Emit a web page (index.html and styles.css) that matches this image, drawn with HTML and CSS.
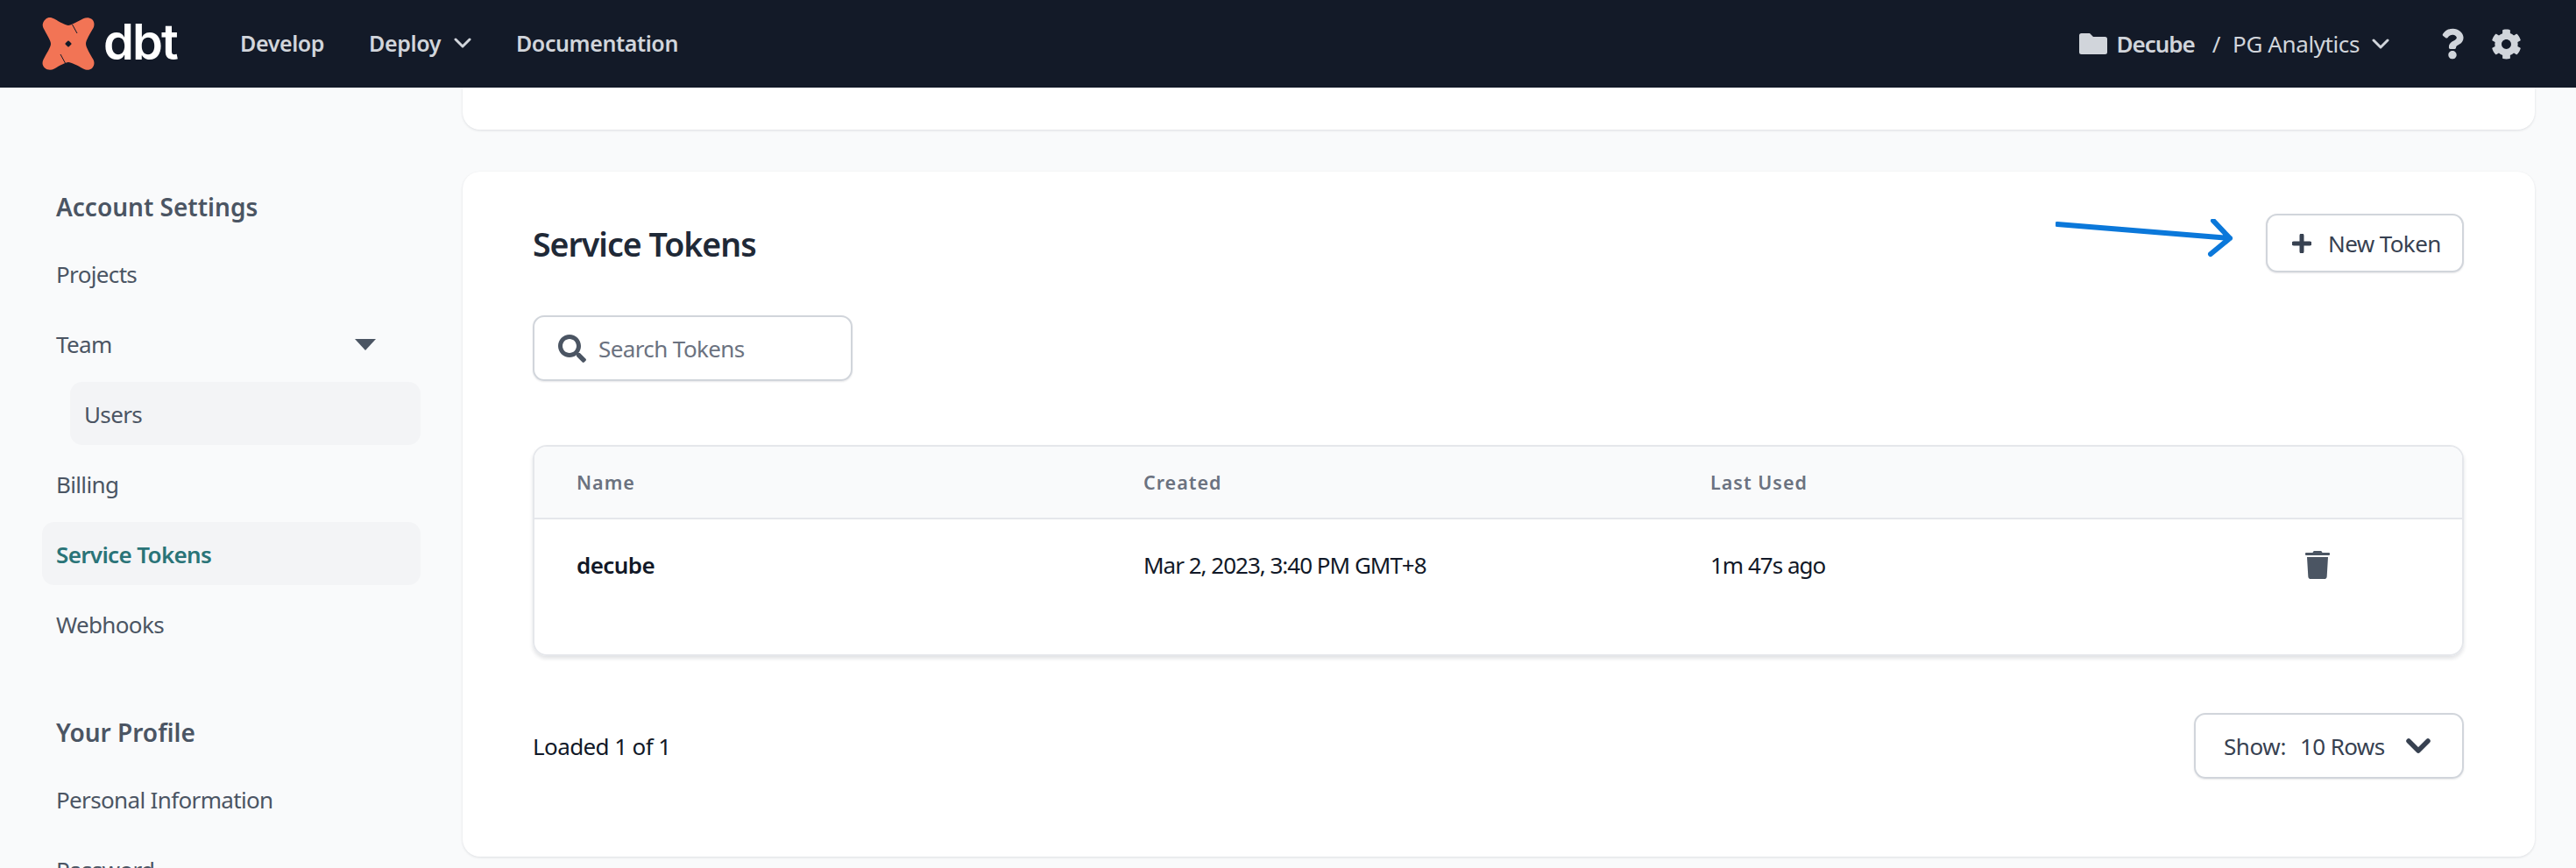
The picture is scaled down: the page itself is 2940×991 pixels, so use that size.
FILE: index.html
```html
<!DOCTYPE html>
<html lang="en">
<head>
<meta charset="utf-8">
<title>Service Tokens</title>
<link rel="stylesheet" href="styles.css">
</head>
<body>
<header class="topbar">
  <a class="brand">
    <svg class="brand-mark" viewBox="0 0 60 60">
      <path fill="#f27455" d="M4 2C7-1 11 0 14 1.500C20 5 27 9 30 9C33 9 41 4 47 1.200C50-.3 54-.3 57 2C60 5 60 9 58.500 12C55 18 50 26 50 30C50 34 55 42 58.500 48C60 51 60 55 57 58C54 60.500 50 60 47 58.500C41 55 33 51 30 51C27 51 20 55 14 58.500C10 60.500 6 60 3 57.500C0 54.500 0 51 1.500 48C5 41 10 34 10 30C10 26 5 19 1.500 12C0 9 .5 5 4 2Z"/>
      <path fill="none" stroke="#131a28" stroke-width="1" d="M34.500 8L40 18M21 42L27 53"/>
      <rect x="27.200" y="27.200" width="5.600" height="5.600" rx="1" fill="#131a28" transform="rotate(45 30 30)"/>
    </svg>
    <span class="brand-name">dbt</span>
  </a>
  <nav class="topnav">
    <a class="topnav-link">Develop</a>
    <a class="topnav-link">Deploy
      <svg class="chev-sm" viewBox="0 0 20 12"><path d="M2 2l8 8 8-8"/></svg>
    </a>
    <a class="topnav-link">Documentation</a>
  </nav>
  <div class="topright">
    <svg class="folder" viewBox="0 0 32 24"><path d="M2.500 0h9.500l4 4h13.500a2.500 2.500 0 0 1 2.500 2.500v15a2.500 2.500 0 0 1-2.500 2.500h-27a2.500 2.500 0 0 1-2.500-2.500v-19a2.500 2.500 0 0 1 2.500-2.500z"/></svg>
    <span class="account">Decube</span>
    <span class="slash">/</span>
    <span class="project">PG Analytics</span>
    <svg class="chev-sm chev-project" viewBox="0 0 20 12"><path d="M2 2l8 8 8-8"/></svg>
    <svg class="icon-help" viewBox="0 0 384 512"><path d="M202.021 0C122.202 0 70.503 32.703 29.914 91.026c-7.363 10.58-5.093 25.086 5.178 32.874l43.138 32.709c10.373 7.865 25.132 6.026 33.253-4.148 25.049-31.381 43.63-49.449 82.757-49.449 30.764 0 68.816 19.799 68.816 49.631 0 22.552-18.617 34.134-48.993 51.164-35.423 19.86-82.299 44.576-82.299 106.405V320c0 13.255 10.745 24 24 24h72.471c13.255 0 24-10.745 24-24v-5.773c0-42.86 125.268-44.645 125.268-160.627C377.504 66.256 286.902 0 202.021 0zM192 373.459c-38.196 0-69.271 31.075-69.271 69.271 0 38.195 31.075 69.27 69.271 69.27s69.271-31.075 69.271-69.271-31.075-69.27-69.271-69.27z"/></svg>
    <svg class="icon-gear" viewBox="0 0 512 512"><path d="M487.4 315.7l-42.6-24.6c4.3-23.2 4.3-47 0-70.2l42.6-24.6c4.9-2.8 7.1-8.6 5.5-14-11.1-35.6-30-67.8-54.7-94.6-3.8-4.1-10-5.1-14.8-2.3L380.8 110c-17.9-15.4-38.5-27.3-60.8-35.1V25.800c0-5.600-3.900-10.500-9.400-11.700-36.700-8.200-74.300-7.800-109.200 0-5.500 1.200-9.400 6.100-9.400 11.700V75c-22.200 7.900-42.800 19.800-60.800 35.100L88.700 85.500c-4.900-2.800-11-1.900-14.800 2.300-24.700 26.700-43.600 58.900-54.700 94.600-1.700 5.400.600 11.200 5.500 14L67.300 221c-4.300 23.200-4.300 47 0 70.200l-42.600 24.600c-4.900 2.800-7.100 8.600-5.500 14 11.100 35.600 30 67.800 54.700 94.600 3.800 4.100 10 5.100 14.800 2.300l42.600-24.600c17.900 15.400 38.500 27.300 60.800 35.100v49.200c0 5.600 3.900 10.500 9.400 11.700 36.700 8.200 74.300 7.800 109.200 0 5.500-1.200 9.400-6.100 9.400-11.700v-49.200c22.200-7.900 42.800-19.800 60.800-35.100l42.600 24.600c4.900 2.800 11 1.900 14.800-2.300 24.700-26.700 43.600-58.900 54.700-94.600 1.500-5.500-.700-11.300-5.600-14.100zM256 336c-44.100 0-80-35.900-80-80s35.900-80 80-80 80 35.900 80 80-35.900 80-80 80z"/></svg>
  </div>
</header>
<div class="shell">
  <aside class="sidebar">
    <h2 class="side-heading">Account Settings</h2>
    <ul class="side-list">
      <li class="side-item">Projects</li>
      <li class="side-item side-item-toggle">Team<span class="caret"></span></li>
      <li class="side-item side-sub">Users</li>
      <li class="side-item">Billing</li>
      <li class="side-item side-active">Service Tokens</li>
      <li class="side-item">Webhooks</li>
    </ul>
    <h2 class="side-heading side-heading-next">Your Profile</h2>
    <ul class="side-list">
      <li class="side-item">Personal Information</li>
      <li class="side-item">Password</li>
    </ul>
  </aside>
  <main class="main">
    <div class="card card-prev"></div>
    <section class="card card-tokens">
      <svg class="annot-arrow" viewBox="0 0 204 44"><path d="M2 6L199 22M180 2L199 22L177 40"/></svg>
      <div class="title-row">
        <h1 class="title">Service Tokens</h1>
        <button class="btn-new">
          <svg class="plus" viewBox="0 0 22 22"><path d="M11 2v18M2 11h18"/></svg>
          <span>New Token</span>
        </button>
      </div>
      <div class="search">
        <svg class="search-icon" viewBox="0 0 512 512"><path d="M505 442.7L405.3 343c-4.500-4.500-10.600-7-17-7H372c27.600-35.300 44-79.700 44-128C416 93.100 322.900 0 208 0S0 93.100 0 208s93.100 208 208 208c48.300 0 92.700-16.400 128-44v16.300c0 6.400 2.500 12.500 7 17l99.700 99.700c9.400 9.400 24.600 9.400 33.900 0l28.300-28.300c9.400-9.400 9.400-24.600.100-34zM208 336c-70.700 0-128-57.200-128-128 0-70.700 57.200-128 128-128 70.700 0 128 57.200 128 128 0 70.700-57.200 128-128 128z"/></svg>
        <span class="search-text">Search Tokens</span>
      </div>
      <div class="table">
        <div class="table-head">
          <span class="th">Name</span>
          <span class="th">Created</span>
          <span class="th">Last Used</span>
        </div>
        <div class="table-row">
          <span class="td td-name">decube</span>
          <span class="td">Mar 2, 2023, 3:40 PM GMT+8</span>
          <span class="td">1m 47s ago</span>
          <svg class="trash" viewBox="0 0 448 512"><path d="M432 32H312l-9.400-18.700A24 24 0 0 0 281.100 0H166.800a23.720 23.720 0 0 0-21.400 13.300L136 32H16A16 16 0 0 0 0 48v16a16 16 0 0 0 16 16h416a16 16 0 0 0 16-16V48a16 16 0 0 0-16-16zM53.200 467a48 48 0 0 0 47.900 45h245.800a48 48 0 0 0 47.900-45L416 112H32z"/></svg>
        </div>
      </div>
      <div class="table-foot">
        <span class="loaded">Loaded 1 of 1</span>
        <div class="show">
          <span class="show-label">Show:</span>
          <span class="show-value">10 Rows</span>
          <svg class="chev-show" viewBox="0 0 28 18"><path d="M3 3l11 11L25 3"/></svg>
        </div>
      </div>
    </section>
  </main>
</div>
</body>
</html>
```
FILE: styles.css
```css
* { box-sizing: border-box; }
html, body { margin: 0; height: 991px; overflow: hidden; }
body {
  background: #f9fafb;
  font-family: "Noto Sans", sans-serif;
  font-size: 26px;
  letter-spacing: -0.4px;
  color: #111827;
}
.topbar {
  height: 100px;
  background: #131a28;
  display: flex;
  align-items: center;
  padding: 0 62px 0 48px;
  color: #d1d5db;
}
.brand { display: flex; align-items: center; gap: 10px; width: 226px; }
.brand-mark { width: 60px; height: 60px; flex: none; }
.brand-name {
  font-family: "Inter", sans-serif;
  font-size: 56px;
  font-weight: 600;
  line-height: 60px;
  letter-spacing: -2px;
  color: #fff;
  position: relative;
  top: -2px;
}
.topnav { display: flex; align-items: center; gap: 51px; font-weight: 600; font-size: 25px; position: relative; top: -1px; }
.topnav-link { display: flex; align-items: center; gap: 15px; }
.chev-sm { width: 20px; height: 12px; fill: none; stroke: #d1d5db; stroke-width: 3; stroke-linecap: round; stroke-linejoin: round; }
.topright { margin-left: auto; display: flex; align-items: center; }
.folder { width: 32px; height: 24px; fill: #d1d5db; margin-right: 10px; }
.account { font-weight: 600; letter-spacing: -1px; }
.slash { margin: 0 14px 0 20px; }
.chev-project { margin-left: 14px; margin-right: 59px; }
.icon-help { width: 26px; height: 36px; fill: #d1d5db; margin-right: 31px; }
.icon-gear { width: 35px; height: 35px; fill: #d1d5db; }

.shell { display: flex; height: 891px; }
.sidebar { width: 528px; flex: none; padding: 116px 48px 0; color: #4b5563; }
.side-heading { margin: 0 0 20px; font-size: 28px; line-height: 40px; font-weight: 600; padding-left: 16px; letter-spacing: 0; }
.side-heading-next { margin-top: 68px; }
.side-list { list-style: none; margin: 0; padding: 0; display: flex; flex-direction: column; gap: 8px; }
.side-item { height: 72px; display: flex; align-items: center; padding: 2px 0 0 16px; border-radius: 14px; letter-spacing: -.65px; }
.side-item-toggle { justify-content: space-between; padding-right: 51px; }
.caret { width: 0; height: 0; border-left: 12px solid transparent; border-right: 12px solid transparent; border-top: 13px solid #4b5563; }
.side-sub { margin-left: 32px; background: #f3f4f6; }
.side-active { background: #f3f4f6; color: #2a7478; font-weight: 600; }

.main { flex: 1; padding-right: 47px; display: flex; flex-direction: column; gap: 48px; }
.card { background: #fff; box-shadow: 0 1px 3px rgba(17, 24, 39, .12); }
.card-prev { height: 48px; border-radius: 0 0 20px 20px; }
.card-tokens { height: 782px; border-radius: 20px; padding: 48px 81px 0 80px; position: relative; }
.annot-arrow { position: absolute; left: 1818px; top: 54px; width: 204px; height: 44px; fill: none; stroke: #0b78da; stroke-width: 6; stroke-linecap: round; stroke-linejoin: round; }
.title-row { display: flex; align-items: center; justify-content: space-between; height: 67px; }
.title { margin: 2px 0 0; font-size: 37.5px; font-weight: 600; color: #1f2937; letter-spacing: -1px; }
.btn-new {
  width: 226px; height: 67px; padding: 0 0 0 28px;
  display: flex; align-items: center; gap: 19px;
  background: #fff; border: 2px solid #d1d5db; border-radius: 13px;
  box-shadow: 0 1px 2px rgba(17, 24, 39, .1);
  font: inherit; letter-spacing: -.6px; color: #374151;
}
.plus { width: 22px; height: 22px; fill: none; stroke: #374151; stroke-width: 5; stroke-linecap: round; flex: none; }
.search {
  width: 365px; height: 75px; margin-top: 49px; padding-left: 27px;
  display: flex; align-items: center; gap: 14px;
  border: 2px solid #d1d5db; border-radius: 13px;
  box-shadow: 0 1px 2px rgba(17, 24, 39, .1);
  color: #6b7280; letter-spacing: -.6px;
}
.search-icon { width: 32px; height: 32px; fill: #4b5563; flex: none; }
.table {
  margin-top: 73px; height: 241px;
  border: 2px solid #e5e7eb; border-radius: 16px;
  box-shadow: 0 3px 4px rgba(17, 24, 39, .12);
  overflow: hidden;
}
.table-head, .table-row { display: grid; grid-template-columns: 647px 647px 646px 1fr; padding-left: 48px; }
.table-head { height: 83px; align-items: center; background: #f9fafb; border-bottom: 2px solid #e5e7eb; }
.th { font-size: 21.5px; font-weight: 600; color: #6b7280; letter-spacing: 1px; }
.table-row { padding-top: 34px; align-items: center; }
.td { line-height: 36px; letter-spacing: -1px; }
.td-name { font-weight: 600; color: #111827; letter-spacing: -.6px; }
.trash { width: 28px; height: 32px; fill: #4b5563; margin-left: 33px; }
.table-foot { margin-top: 65px; display: flex; align-items: center; justify-content: space-between; }
.loaded { letter-spacing: -.6px; }
.show {
  width: 308px; height: 75px; padding-left: 32px;
  display: flex; align-items: center;
  border: 2px solid #d1d5db; border-radius: 13px;
  box-shadow: 0 1px 2px rgba(17, 24, 39, .1);
  color: #374151;
}
.show-label { margin-right: 16px; }
.show-value { letter-spacing: -.6px; }
.chev-show { width: 28px; height: 18px; margin-left: 24px; fill: none; stroke: #374151; stroke-width: 5.5; stroke-linecap: round; stroke-linejoin: round; }
```
